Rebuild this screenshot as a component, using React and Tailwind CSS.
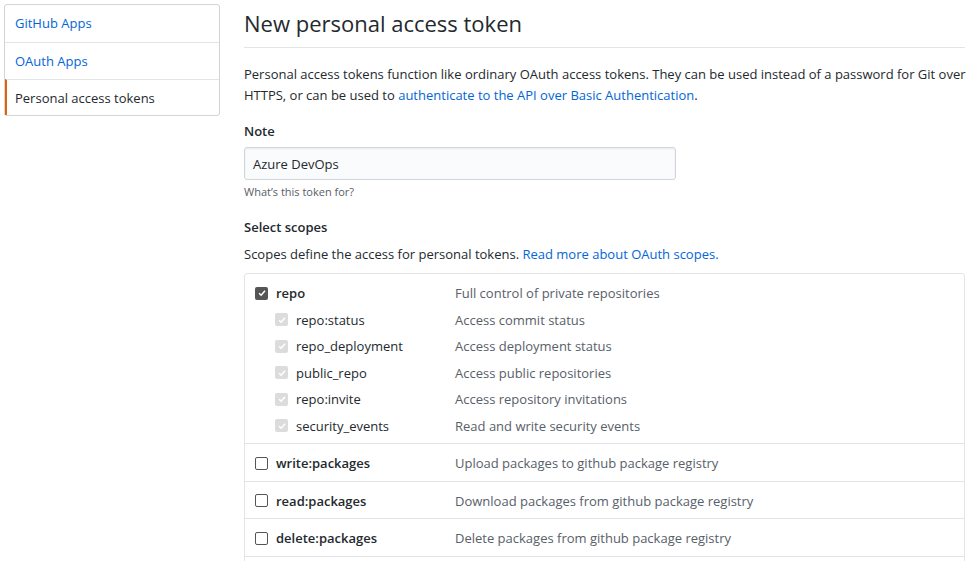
import React from "react";

/*
  GitHub developer settings: new personal access token form.
*/

const subScopes = [
  ["repo:status", "Access commit status"],
  ["repo_deployment", "Access deployment status"],
  ["public_repo", "Access public repositories"],
  ["repo:invite", "Access repository invitations"],
  ["security_events", "Read and write security events"],
];

const scopes = [
  ["write:packages", "Upload packages to github package registry"],
  ["read:packages", "Download packages from github package registry"],
  ["delete:packages", "Delete packages from github package registry"],
];

export default function App() {
  return (
    <div className="min-h-screen bg-white text-[#24292e] text-[13px] leading-[20px] font-['Open_Sans','Noto_Sans',sans-serif] flex gap-6 pl-1 pt-1 overflow-hidden">
      {/* Sidebar */}
      <nav className="w-[216px] shrink-0 self-start border border-[#d1d5da] rounded-[3px]">
        <a className="block h-[37px] leading-[37px] pl-[10px] text-[#0366d6]">GitHub Apps</a>
        <a className="block h-[37px] leading-[37px] pl-[10px] text-[#0366d6] border-t border-[#e1e4e8]">OAuth Apps</a>
        <a className="block h-[36px] leading-[36px] pl-[8px] border-t border-[#e1e4e8] border-l-2 border-l-[#e36209]">Personal access tokens</a>
      </nav>

      {/* Main */}
      <main className="w-[721px] shrink-0">
        <h1 className="text-[22px] font-normal leading-[38px] pb-[5px] border-b border-[#e1e4e8]">New personal access token</h1>

        <p className="mt-[16px] leading-[21px]">
          <span className="whitespace-nowrap">
            Personal access tokens function like ordinary OAuth access tokens. They can be used instead of a password for Git over
          </span>
          <br />
          HTTPS, or can be used to <a className="text-[#0366d6]">authenticate to the API over Basic Authentication</a>.
        </p>

        <div className="mt-[15px] font-semibold">Note</div>
        <div className="mt-[6px] w-[432px] h-[33px] bg-[#fafbfc] border border-[#d1d5da] rounded-[3px] shadow-[inset_0_1px_2px_rgba(27,31,35,0.075)] flex items-center pl-2">
          Azure DevOps
        </div>
        <div className="mt-[4px] text-[11px] leading-[16px] text-[#586069]">What’s this token for?</div>

        <div className="mt-[17px] font-semibold">Select scopes</div>
        <p className="mt-[7px]">
          Scopes define the access for personal tokens. <a className="text-[#0366d6]">Read more about OAuth scopes.</a>
        </p>

        <div className="mt-[9px] border border-[#e1e4e8] rounded-[3px]">
          <div className="pt-[6px] pb-[4px]">
            <Row name="repo" desc="Full control of private repositories" checked tall />
            {subScopes.map(([n, d]) => (
              <SubRow key={n} name={n} desc={d} />
            ))}
          </div>
          {scopes.map(([n, d]) => (
            <div key={n} className="border-t border-[#e1e4e8] pt-[9px] pb-[7.5px]">
              <Row name={n} desc={d} />
            </div>
          ))}
          <div className="border-t border-[#e1e4e8] h-[10px]" />
        </div>
      </main>
    </div>
  );
}

function Check({ color }) {
  return (
    <span className={`w-[13px] h-[13px] rounded-[2px] flex items-center justify-center ${color}`}>
      <svg viewBox="0 0 12 12" className="w-[10px] h-[10px]">
        <path d="M2.5 6.3 L5 8.7 L9.6 3.4" fill="none" stroke="#fff" strokeWidth="1.8" />
      </svg>
    </span>
  );
}

function Box({ checked, disabled }) {
  if (disabled) return <Check color="bg-[#dcdcdc]" />;
  if (checked) return <Check color="bg-[#555555]" />;
  return <span className="w-[13px] h-[13px] rounded-[2px] border border-[#555555] bg-white" />;
}

function Row({ name, desc, checked, tall }) {
  return (
    <div className={`flex items-center ${tall ? "h-[26.5px]" : "h-[20px]"}`}>
      <div className="w-[210px] flex items-center pl-[10px] gap-[8px]">
        <Box checked={checked} />
        <span className="font-semibold">{name}</span>
      </div>
      <span className="text-[#586069]">{desc}</span>
    </div>
  );
}

function SubRow({ name, desc }) {
  return (
    <div className="flex items-center h-[26.5px]">
      <div className="w-[210px] flex items-center pl-[30px] gap-[8px]">
        <Box disabled />
        <span>{name}</span>
      </div>
      <span className="text-[#586069]">{desc}</span>
    </div>
  );
}
